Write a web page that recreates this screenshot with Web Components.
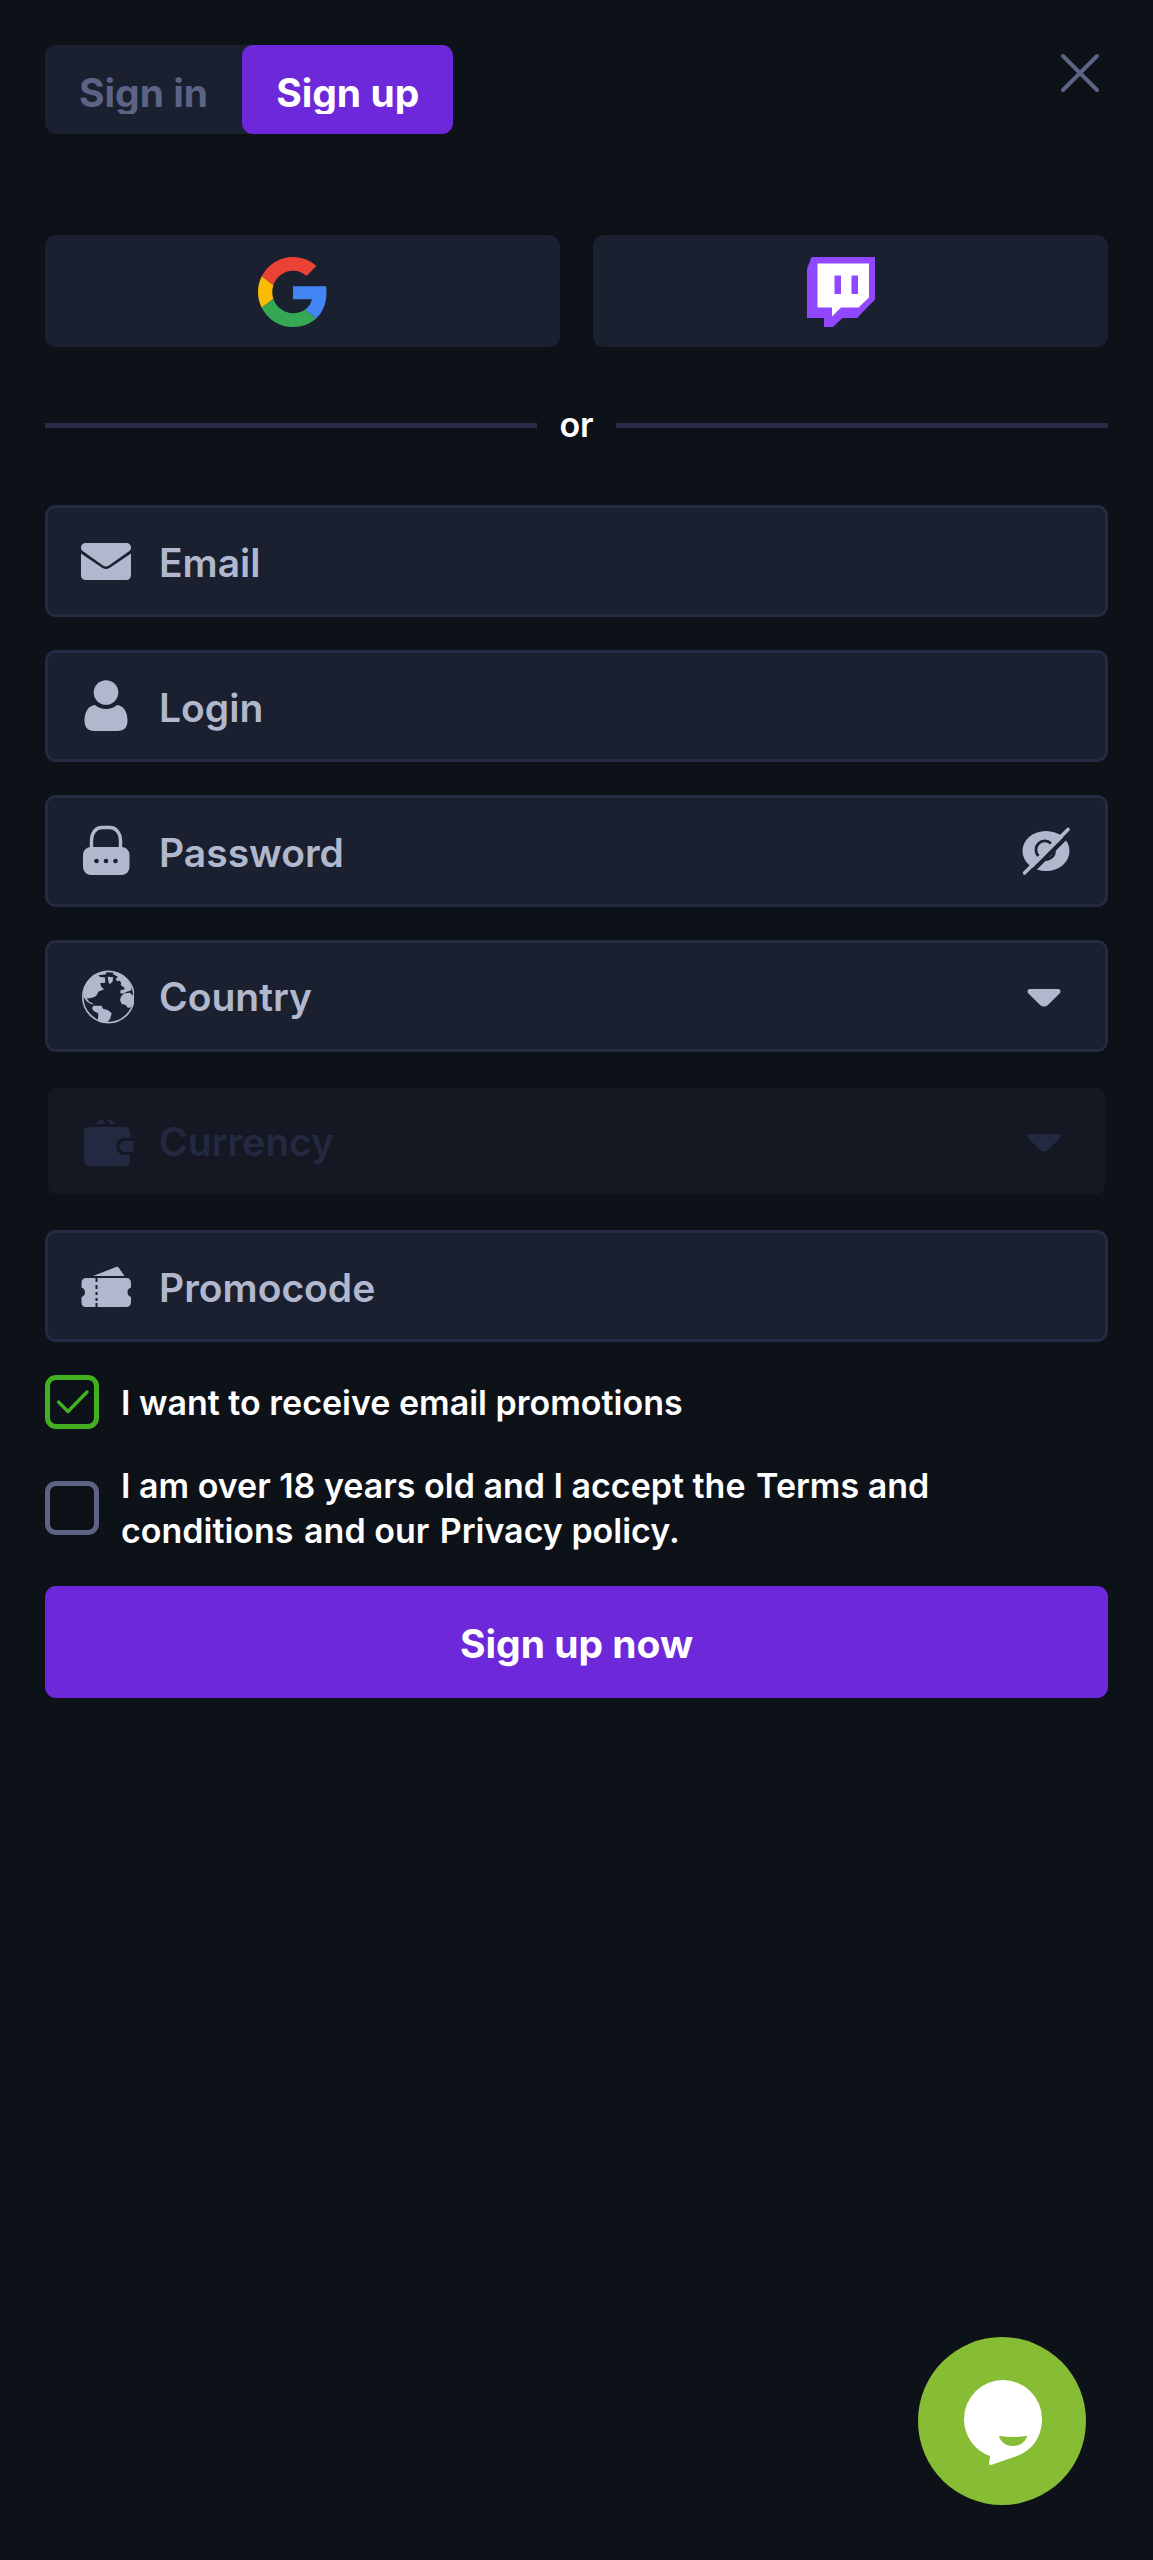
<!DOCTYPE html>
<html lang="en">
<head>
<meta charset="utf-8">
<meta name="viewport" content="width=device-width, initial-scale=1">
<title>Sign up</title>
<style>
  html { background: #0d1118; }
  body {
    margin: 0;
    min-height: 100vh;
    font-family: Inter, "Liberation Sans", sans-serif;
    font-weight: 600;
    color: #fff;
    --surface: #1a202f;
    --outline: #252b42;
    --label: #b1b8ce;
    --muted: #5d6385;
    --accent: #6d28d9;
    --text: 34px;
    --title: 39px;
    --radius: 11px;
  }
</style>
</head>
<body>
<signup-page></signup-page>
<chat-bubble></chat-bubble>

<script>
const icons = {
  mail: `<svg viewBox="0 0 56 56" width="56" height="56" fill="currentColor"><path d="M3 14.500a4.500 4.500 0 0 1 4.500-4.500h41a4.500 4.500 0 0 1 4.500 4.500c0 2-.8 3-2.300 4L31 32.400c-2 1.300-4 1.300-6 0L5.300 18.500C3.800 17.500 3 16.500 3 14.500z"/><path d="M3 20.500l21.500 14.400c2.400 1.500 4.600 1.500 7 0L53 20.500V42.500a4.500 4.500 0 0 1-4.500 4.500h-41A4.500 4.500 0 0 1 3 42.500z"/></svg>`,
  user: `<svg viewBox="0 0 56 56" width="56" height="56" fill="currentColor"><circle cx="28" cy="14.500" r="12.300"/><path d="M17 27c3 2.700 7 4 11 4s8-1.300 11-4c6.500.4 10.500 7 10.500 15.500 0 7-3.500 10.500-10 10.500h-23C10 53 6.500 49.500 6.500 42.500 6.500 34 10.500 27.400 17 27z"/></svg>`,
  lock: `<svg viewBox="0 0 56 56" width="56" height="56"><path d="M13.500 25V18C13.500 9.500 18 4.500 24 4.500h8c5.500 0 10.500 5 10.500 13.500v7" fill="none" stroke="currentColor" stroke-width="3.400"/><path fill="currentColor" fill-rule="evenodd" d="M13 24h30.500a8 8 0 0 1 8 8v12a8 8 0 0 1-8 8H13a8 8 0 0 1-8-8V32a8 8 0 0 1 8-8zm5.500 11.700a2.300 2.300 0 1 0 .01 0zm9.500 0a2.300 2.300 0 1 0 .01 0zm9.500 0a2.300 2.300 0 1 0 .01 0z"/></svg>`,
  globe: `<svg viewBox="0 0 56 56" width="56" height="56"><circle cx="30.400" cy="29" r="25.600" fill="none" stroke="currentColor" stroke-width="1.600"/><g fill="currentColor"><path d="M5.300 28.700Q5 17 12 10.300 16 6 20.300 5l7.700-1v2.300l-7.700 1L22 9l5 .5.300 5.200-5.300.6 1.300 3.400 2.700 2.600-5.700 2.400-1.300 3-2 2-5 1.600-3.300 0 2.600 3.400 4 2-1 .8-5-2.500z"/><path d="M29.700 8.700l5.600.6-.8 4-2.500 3-1.500-2z"/><path d="M34.700 6L37 4q8 2 13.300 9.700 3 4 3.400 6.600l-1 2.400-4 1-4 2-2.500-.6.500-3 2.800-.3 1.500-1.500-4.300-3.300.5-1.700-1.300-2.600-3 .5-1-2.500 2-2z"/><path d="M46.300 25.300l5.700-.6 2.300 2.300 1.700 1.500q0 5-3 11l-3.300.2-2-2.700-4-1L42 32l1-3.500z"/><path d="M15.300 37.700h8.400l1.300 3 5 1.500 3.700 3.100-1.700 6-3.500 3.500q-5 0-8.500-2l.3-7.500-4.300-2-2-3z"/></g></svg>`,
  wallet: `<svg viewBox="0 0 56 56" width="56" height="56" fill="currentColor"><path d="M17 11q5-5 8-4l2 4zM29 7q5-1 8 4h-5zM10.500 14H47a5 5 0 0 1 5 5v6h-5.500a8.500 8.500 0 0 0 0 17H52v6a5 5 0 0 1-5 5H11a5 5 0 0 1-5-5V18.500a4.500 4.500 0 0 1 4.500-4.500z"/><path d="M47 28h8.500v11H47a5.500 5.500 0 0 1 0-11z"/></svg>`,
  ticket: `<svg viewBox="0 0 56 56" width="56" height="56" fill="currentColor"><path d="M15 18L38 9q2-.8 3 1L46.500 18z"/><path d="M8.500 20h9v4h2v-4H48q5 0 5 5v4.500a5 5 0 0 0 0 9.500v5q0 5-5 5H19.500v-4h-2v4H8q-4.500 0-4.500-4.500v-5.500a5 5 0 0 0 0-9.500V25q0-5 5-5zm9 7v4h2v-4zm0 7v3h2v-3zm0 6v3h2v-3z" fill-rule="evenodd"/></svg>`,
  eye: `<svg viewBox="0 0 56 56" width="56" height="56"><ellipse cx="28" cy="28" rx="23.500" ry="20" fill="currentColor"/><path d="M33 20.500A8.500 8.500 0 0 0 20.500 33M36.200 26a8.500 8.500 0 0 1-10.500 10.200M32 29q-.5 3-3.500 4" fill="none" stroke="var(--surface)" stroke-width="2.800"/><path d="M9.500 53L53 9.500" stroke="var(--surface)" stroke-width="4"/><path d="M6.500 50L50 6.500" stroke="currentColor" stroke-width="3.600" stroke-linecap="round"/></svg>`,
  caret: `<svg viewBox="0 0 56 56" width="56" height="56"><path fill="currentColor" d="M12 21h28q2.500 0 2.500 2.500 0 1-1 2L30 37q-4 3-8 0L10.500 25.500q-1-1-1-2 0-2.500 2.500-2.500z"/></svg>`,
  close: `<svg viewBox="0 0 42 42" width="42" height="42"><path d="M4 4l34 34M38 4L4 38" stroke="currentColor" stroke-width="4" stroke-linecap="round"/></svg>`,
  google: `<svg viewBox="0 0 48 48" width="70" height="70"><path fill="#EA4335" d="M24 9.500c3.540 0 6.710 1.220 9.210 3.600l6.850-6.850C35.900 2.380 30.470 0 24 0 14.620 0 6.510 5.380 2.560 13.220l7.980 6.190C12.430 13.720 17.740 9.500 24 9.500z"/><path fill="#4285F4" d="M46.980 24.550c0-1.570-.15-3.090-.38-4.550H24v9.020h12.940c-.58 2.960-2.260 5.480-4.780 7.180l7.730 6c4.510-4.180 7.090-10.360 7.090-17.650z"/><path fill="#FBBC05" d="M10.530 28.590c-.48-1.450-.76-2.990-.76-4.590s.27-3.140.76-4.590l-7.980-6.190C.92 16.460 0 20.120 0 24c0 3.880.92 7.540 2.560 10.780l7.970-6.190z"/><path fill="#34A853" d="M24 48c6.480 0 11.930-2.130 15.890-5.810l-7.730-6c-2.150 1.450-4.920 2.300-8.160 2.300-6.260 0-11.570-4.220-13.470-9.910l-7.980 6.190C6.510 42.620 14.620 48 24 48z"/></svg>`,
  twitch: `<svg viewBox="0 0 68 70" width="68" height="70"><path fill="#9146ff" d="M4.500 0H68v42.500L50 61H35.500L26 70H17v-9H0V12z"/><path fill="#fff" d="M10.500 6.500H62v34L51.500 50.500H34L25 59.500v-9H10.500z"/><path fill="#9146ff" d="M27.500 18.500H34V37h-6.500zM44.500 18.500H51V37h-6.500z"/></svg>`
};

function define(name, html, setup) {
  const template = document.createElement("template");
  template.innerHTML = html;
  customElements.define(name, class extends HTMLElement {
    connectedCallback() {
      if (this.shadowRoot) return;
      const root = this.attachShadow({ mode: "open" });
      root.append(template.content.cloneNode(true));
      const icon = root.querySelector("[data-icon]");
      if (icon) icon.innerHTML = icons[this.getAttribute("icon")];
      if (setup) setup(this, root);
    }
  });
}

const labelButton = (host, root) =>
  root.querySelector("button").setAttribute("aria-label", host.getAttribute("label"));

const fieldStyle = `
  :host { display: block; color: var(--label); }
  .box { box-sizing: border-box; display: flex; align-items: center; height: 112px;
    padding: 0 31px 0 30px; border: 3px solid var(--outline); border-radius: var(--radius);
    background: var(--surface); background-clip: padding-box; }
  svg { display: block; }
  .icon, .caret { flex: none; }
  input, select { flex: 1; min-width: 0; width: 100%; height: 100%; margin: 0; padding: 2px 0 0 25px;
    border: 0; outline: 0; background: none; appearance: none;
    font: 600 var(--title)/48px Inter, "Liberation Sans", sans-serif; color: inherit; opacity: 1; }
  input::placeholder { color: inherit; opacity: 1; }
`;

define("tab-switch", `<style>
  :host { display: block; background: var(--surface); border-radius: var(--radius); }
  div { display: flex; }
  button { margin: 0; height: 89px; padding: 7px 34px 0; border: 0; border-radius: var(--radius);
    background: none; color: var(--muted); font: 700 var(--title)/42px Inter, "Liberation Sans", sans-serif; }
  button[aria-selected="true"] { background: var(--accent); color: #fff; }
  span { display: block; overflow: hidden; }
</style><div role="tablist"><button type="button" role="tab" aria-selected="false"><span>Sign in</span></button><button type="button" role="tab" aria-selected="true"><span>Sign up</span></button></div>`);

define("icon-button", `<style>
  :host { display: block; color: var(--icon-color, var(--muted)); }
  button { display: grid; place-items: center; margin: 0; padding: var(--icon-padding, 7px); border: 0; background: none; color: inherit; }
  svg { display: block; }
</style><button type="button" data-icon></button>`, labelButton);

define("social-button", `<style>
  :host { display: block; flex: 1; }
  button { display: grid; place-items: center; width: 100%; height: 112px; margin: 0; padding: 2px 20px 0 0;
    border: 0; border-radius: var(--radius); background: var(--surface); }
  svg { display: block; }
</style><button type="button" data-icon></button>`, labelButton);

define("or-divider", `<style>
  :host { display: flex; align-items: center; gap: 22px; font-size: var(--text); line-height: 46px; }
  i { flex: 1; height: 5px; background: #282c47; }
</style><i></i><slot></slot><i></i>`);

define("text-field", `<style>${fieldStyle}</style>
<div class="box"><span class="icon" data-icon></span><input><slot></slot></div>`, (host, root) => {
  const input = root.querySelector("input");
  input.type = host.getAttribute("type") || "text";
  input.placeholder = host.getAttribute("label");
  input.setAttribute("aria-label", host.getAttribute("label"));
});

define("select-field", `<style>${fieldStyle}
  .caret { pointer-events: none; }
  :host([disabled]) { color: #222940; }
  :host([disabled]) .box { border-color: transparent; background-color: #151822; }
</style>
<div class="box"><span class="icon" data-icon></span><select><option></option></select><span class="caret">${icons.caret}</span></div>`, (host, root) => {
  const select = root.querySelector("select");
  select.options[0].textContent = host.getAttribute("label");
  select.setAttribute("aria-label", host.getAttribute("label"));
  select.disabled = host.hasAttribute("disabled");
});

define("check-field", `<style>
  :host { display: block; }
  label { display: flex; align-items: center; gap: 22px; font-size: var(--text); line-height: 45px; }
  .tick { display: grid; flex: none; }
  .tick > * { grid-area: 1 / 1; }
  input { box-sizing: border-box; width: 54px; height: 54px; margin: 0; appearance: none;
    border: 5px solid var(--muted); border-radius: var(--radius); }
  svg { display: none; pointer-events: none; }
  input:checked { border-color: #43b021; }
  input:checked + svg { display: block; }
</style><label><span class="tick"><input type="checkbox"><svg viewBox="0 0 54 54" width="54" height="54"><path d="M13.500 27L23 36.500 42 17" fill="none" stroke="#43b021" stroke-width="3.400" stroke-linecap="round" stroke-linejoin="round"/></svg></span><span><slot></slot></span></label>`, (host, root) => {
  root.querySelector("input").checked = host.hasAttribute("checked");
});

define("primary-button", `<style>
  :host { display: block; }
  button { width: 100%; height: 112px; margin: 0; padding: 4px 0 0; border: 0; border-radius: var(--radius);
    background: var(--accent); color: #fff; font: 700 var(--title)/48px Inter, "Liberation Sans", sans-serif; }
</style><button type="submit"><slot></slot></button>`);

define("chat-bubble", `<style>
  :host { position: fixed; right: 67px; bottom: 55px; }
  button { display: block; width: 168px; height: 168px; margin: 0; padding: 0; border: 0; border-radius: 50%; background: #87bd35; }
  svg { display: block; }
</style><button type="button" aria-label="Open chat"><svg viewBox="0 0 168 168" width="168" height="168"><path fill="#fff" d="M85 43a39 39 0 0 1 39 39c0 17-9 31-25 37l-26 9q-2 0-2-1l1-8A39 39 0 0 1 46 82 39 39 0 0 1 85 43z"/><path fill="#87bd35" d="M82 99q13 2 26 0 2 0 1 1-4 9-14 9T81 100q0-1 1-1z"/></svg></button>`);

define("signup-page", `<style>
  :host { display: block; padding: 45px 45px 60px; }
  header { display: flex; justify-content: space-between; align-items: flex-start; }
  .social { display: flex; gap: 33px; margin-top: 101px; }
  or-divider { margin-top: 55px; }
  form { display: flex; flex-direction: column; }
  .fields { display: flex; flex-direction: column; gap: 33px; margin-top: 57px; }
  .checks { display: flex; flex-direction: column; gap: 34px; margin: 33px 0; }
  .terms { max-width: 900px; }
  .reveal { --icon-color: var(--label); --icon-padding: 0; }
  a { color: inherit; text-decoration: none; margin: 0 2px; }
</style>
<header><tab-switch></tab-switch><icon-button icon="close" label="Close"></icon-button></header>
<div class="social"><social-button icon="google" label="Google"></social-button><social-button icon="twitch" label="Twitch"></social-button></div>
<or-divider>or</or-divider>
<form>
  <div class="fields">
    <text-field icon="mail" label="Email" type="email"></text-field>
    <text-field icon="user" label="Login"></text-field>
    <text-field icon="lock" label="Password" type="password"><icon-button icon="eye" label="Show password" class="reveal"></icon-button></text-field>
    <select-field icon="globe" label="Country"></select-field>
    <select-field icon="wallet" label="Currency" disabled></select-field>
    <text-field icon="ticket" label="Promocode"></text-field>
  </div>
  <div class="checks">
    <check-field checked>I want to receive email promotions</check-field>
    <check-field class="terms">I am over 18 years old and I accept the <a href="#terms">Terms and conditions</a> and our <a href="#privacy">Privacy policy.</a></check-field>
  </div>
  <primary-button>Sign up now</primary-button>
</form>`);
</script>
</body>
</html>
